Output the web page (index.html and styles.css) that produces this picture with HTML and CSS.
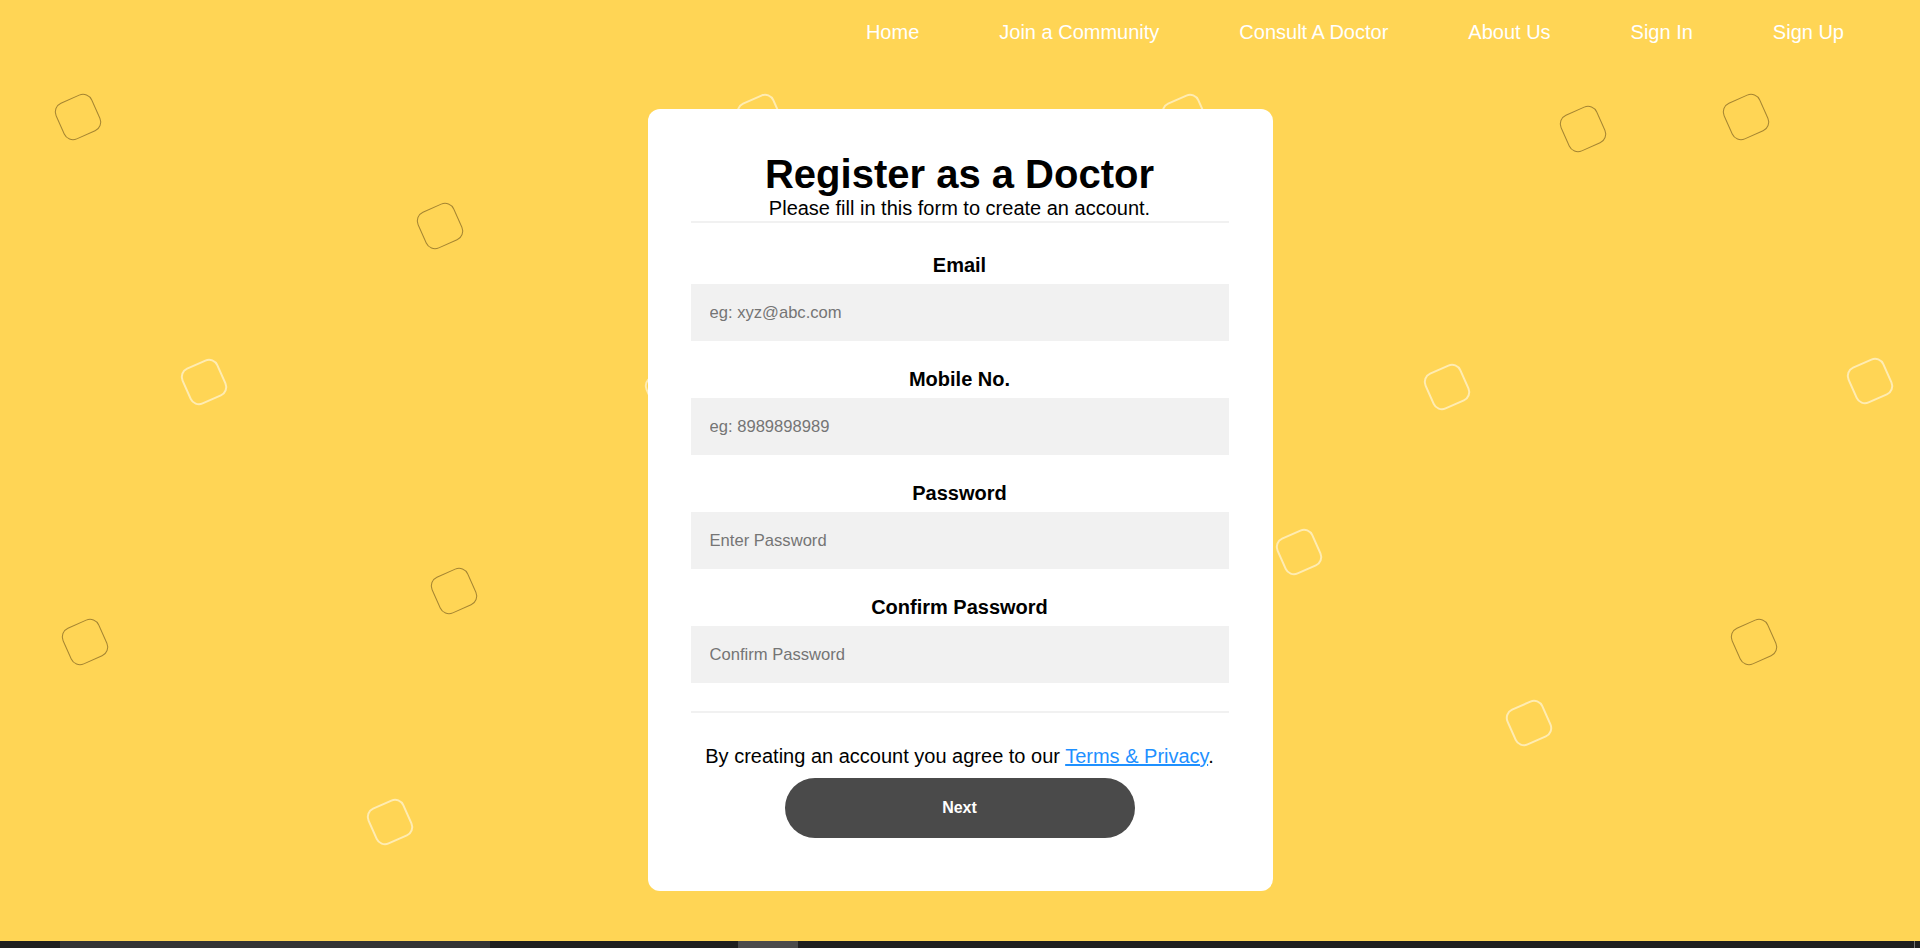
FILE: index.html
```html
<!DOCTYPE html>
<html lang="en">
<head>
<meta charset="utf-8">
<title>Register as a Doctor</title>
<link rel="stylesheet" href="styles.css">
</head>
<body>
<div class="bg" aria-hidden="true">
  <span class="sq dark" style="left:58px;top:97px"></span>
  <span class="sq dark" style="left:420px;top:206px"></span>
  <span class="sq light" style="left:184px;top:362px"></span>
  <span class="sq dark" style="left:434px;top:571px"></span>
  <span class="sq dark" style="left:65px;top:622px"></span>
  <span class="sq light" style="left:370px;top:802px"></span>
  <span class="sq light" style="left:740px;top:97px"></span>
  <span class="sq light" style="left:648px;top:371px"></span>
  <span class="sq light" style="left:1165px;top:97px"></span>
  <span class="sq light" style="left:1279px;top:532px"></span>
  <span class="sq light" style="left:1427px;top:367px"></span>
  <span class="sq dark" style="left:1563px;top:109px"></span>
  <span class="sq dark" style="left:1726px;top:97px"></span>
  <span class="sq light" style="left:1850px;top:361px"></span>
  <span class="sq dark" style="left:1734px;top:622px"></span>
  <span class="sq light" style="left:1509px;top:703px"></span>
</div>

<nav class="nav">
  <ul class="nav-list">
    <li><a href="#">Home</a></li>
    <li><a href="#">Join a Community</a></li>
    <li><a href="#">Consult A Doctor</a></li>
    <li><a href="#">About Us</a></li>
    <li><a href="#">Sign In</a></li>
    <li><a href="#">Sign Up</a></li>
  </ul>
</nav>

<main class="main">
  <form class="card">
    <h1 class="title">Register as a Doctor</h1>
    <p class="subtitle">Please fill in this form to create an account.</p>
    <hr class="rule">

    <div class="fields">
      <div class="field">
        <label class="label" for="email">Email</label>
        <input class="input" id="email" type="text" placeholder="eg: xyz@abc.com">
      </div>
      <div class="field">
        <label class="label" for="mobile">Mobile No.</label>
        <input class="input" id="mobile" type="text" placeholder="eg: 8989898989">
      </div>
      <div class="field">
        <label class="label" for="psw">Password</label>
        <input class="input" id="psw" type="password" placeholder="Enter Password">
      </div>
      <div class="field">
        <label class="label" for="psw2">Confirm Password</label>
        <input class="input" id="psw2" type="password" placeholder="Confirm Password">
      </div>
    </div>

    <hr class="rule rule-bottom">

    <p class="terms">By creating an account you agree to our <a href="#" class="terms-link">Terms &amp; Privacy</a>.</p>
    <button type="button" class="btn">Next</button>
  </form>
</main>

<footer class="strip">
  <span class="strip-a"></span>
  <span class="strip-b"></span>
  <span class="strip-c"></span>
</footer>
</body>
</html>
```

FILE: styles.css
```css
* {
  box-sizing: border-box;
}

html, body {
  margin: 0;
  padding: 0;
}

body {
  position: relative;
  height: 948px;
  overflow: hidden;
  display: flex;
  flex-direction: column;
  background: #ffd555;
  font-family: "Liberation Sans", Arial, sans-serif;
  color: #000;
}

/* decorative background squares */
.bg {
  position: absolute;
  inset: 0;
  z-index: 0;
  pointer-events: none;
}

.sq {
  position: absolute;
  width: 40px;
  height: 40px;
  border-radius: 10px;
  transform: rotate(-24deg);
}

.sq.dark {
  border: 1.5px solid rgba(90, 65, 20, 0.55);
}

.sq.light {
  border: 2px solid rgba(255, 255, 255, 0.55);
}

/* navigation */
.nav {
  position: relative;
  z-index: 1;
  height: 65px;
  padding-top: 21px;
}

.nav-list {
  list-style: none;
  margin: 0;
  padding: 0 36px 0 0;
  display: flex;
  justify-content: flex-end;
}

.nav-list li a {
  display: block;
  padding: 0 40px;
  font-size: 20px;
  line-height: 23px;
  color: #fff;
  text-decoration: none;
}

/* main / card */
.main {
  position: relative;
  z-index: 1;
  flex: 1;
  display: flex;
  justify-content: center;
  align-items: flex-start;
  padding-top: 44px;
}

.card {
  width: 625px;
  background: #fff;
  border-radius: 12px;
  padding: 42px 44px 53px 43px;
  display: flex;
  flex-direction: column;
  align-items: center;
  text-align: center;
}

.title {
  margin: 0;
  font-size: 40px;
  line-height: 46px;
  font-weight: bold;
}

.subtitle {
  margin: 0;
  font-size: 20px;
  line-height: 23px;
}

.rule {
  align-self: stretch;
  margin: 1px 0 0 0;
  border: 0;
  border-top: 2px solid #f1f1f1;
  height: 0;
}

.rule-bottom {
  margin-top: 28px;
}

.fields {
  align-self: stretch;
  margin-top: 31px;
  display: flex;
  flex-direction: column;
  gap: 27px;
}

.field {
  display: flex;
  flex-direction: column;
  gap: 7px;
}

.label {
  font-size: 20px;
  line-height: 23px;
  font-weight: bold;
}

.input {
  width: 100%;
  height: 57px;
  padding: 0 19px;
  border: none;
  outline: none;
  background: #f1f1f1;
  font-family: "Liberation Sans", Arial, sans-serif;
  font-size: 16.6px;
  color: #000;
}

.input::placeholder {
  color: #757575;
}

.terms {
  margin: 32px 0 0 0;
  font-size: 20px;
  line-height: 23px;
}

.terms-link {
  color: dodgerblue;
  text-decoration: underline;
}

.btn {
  margin-top: 10px;
  width: 350px;
  height: 60px;
  border: none;
  border-radius: 30px;
  background: #4a4a4a;
  color: #fff;
  font-family: "Liberation Sans", Arial, sans-serif;
  font-size: 16px;
  font-weight: bold;
  cursor: pointer;
}

/* bottom strip */
.strip {
  position: relative;
  z-index: 1;
  height: 7px;
  background: #1f1f1f;
  display: flex;
}

.strip-a {
  margin-left: 60px;
  width: 430px;
  background: #343434;
}

.strip-b {
  margin-left: 248px;
  width: 60px;
  background: #4b4b4b;
}

.strip-c {
  margin-left: auto;
  margin-right: 5px;
  width: 1px;
  background: #777;
}
```
